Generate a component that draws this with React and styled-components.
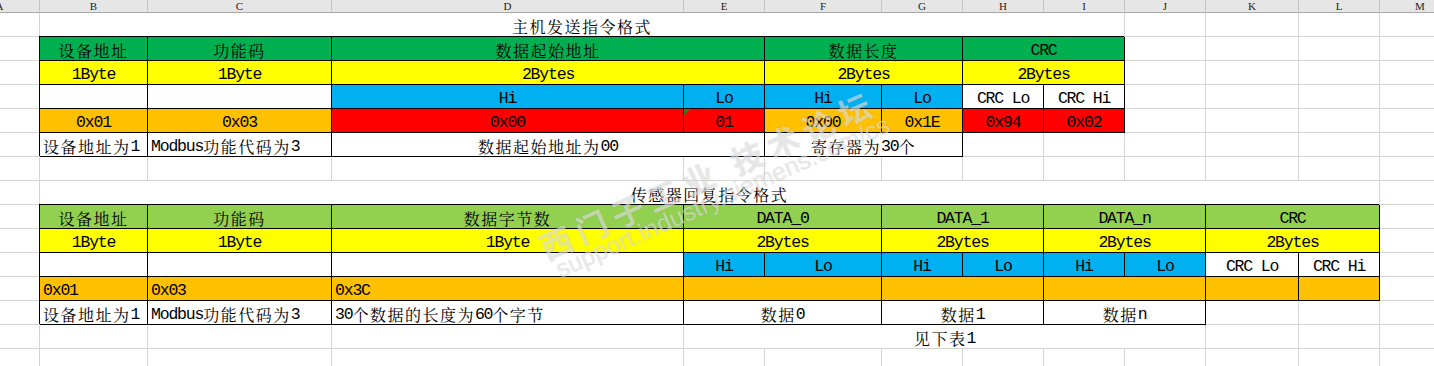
import React from 'react'
import styled, { createGlobalStyle, css } from 'styled-components'

// excel colours
const G = '#00B050'
const LG = '#92D050'
const Y = '#FFFF00'
const B = '#00B0F0'
const O = '#FFC000'
const R = '#FF0000'
const W = '#FFFFFF'

const COLS = [80, 108, 184, 352, 81, 117, 81, 81, 81, 81, 93, 81, 81]
const LETTERS = ['A', 'B', 'C', 'D', 'E', 'F', 'G', 'H', 'I', 'J', 'K', 'L', 'M']

const GlobalStyle = createGlobalStyle`
  body {
    margin: 0;
    background: #fff;
  }
`;

const Page = styled.div`
  position: relative;
  width: 1434px;
  height: 366px;
  overflow: hidden;
  background: #fff;
`;

const Sheet = styled.div`
  display: grid;
  grid-template-columns: ${COLS.map((c) => c + 'px').join(' ')};
  grid-template-rows: 13px repeat(15, 24px);
  width: max-content;
  margin-left: -40px;
`;

const Head = styled.div`
  box-sizing: border-box;
  background: #e6e6e6;
  border-right: 1px solid #c6c6c6;
  border-bottom: 1px solid #a8a8a8;
  display: flex;
  justify-content: center;
  align-items: center;
  font: 11px "Liberation Serif", serif;
  line-height: 12px;
  color: #222;
`;

const Cell = styled.div`
  position: relative;
  box-sizing: border-box;
  grid-column: span ${(p) => p.$span};
  background: ${(p) => p.$bg || '#fff'};
  border-right: 1px solid ${(p) => (p.$box ? '#000' : '#d4d4d4')};
  border-bottom: 1px solid ${(p) => (p.$box ? '#000' : '#d4d4d4')};
  box-shadow: ${(p) => (p.$box ? '-1px -1px 0 0 #000' : 'none')};
  display: flex;
  align-items: flex-end;
  justify-content: ${(p) => (p.$align === 'left' ? 'flex-start' : 'center')};
  padding: 0 3px 2px;
  font-family: "Noto Sans CJK SC", sans-serif;
  font-size: 16px;
  line-height: 14px;
  white-space: nowrap;
  color: #000;

  ${(p) =>
    p.$tri &&
    css`
      &::before {
        content: '';
        position: absolute;
        left: 0;
        top: 0;
        border-top: 6px solid #1e8a1e;
        border-right: 6px solid transparent;
      }
    `}
`;

const Han = styled.span`
  font-family: "Noto Serif CJK SC", "Noto Sans CJK SC", sans-serif;
  font-size: 16px;
  letter-spacing: 1.5px;
`;

const Lat = styled.span`
  font-family: "Liberation Mono", monospace;
  font-size: 16.5px;
  letter-spacing: -1.2px;
`;

const Mark = styled.div`
  position: absolute;
  left: ${(p) => p.$x}px;
  top: ${(p) => p.$y}px;
  transform-origin: 0 50%;
  transform: rotate(-24deg);
  white-space: nowrap;
  line-height: 1;
  color: rgba(255, 255, 255, 0.5);
  text-shadow: 0 0 1px rgba(90, 90, 90, 0.3);
  pointer-events: none;
`;

const MarkTitle = styled(Mark)`
  font: 700 32px "Noto Sans CJK SC", sans-serif;
  letter-spacing: 7px;
`;

const MarkUrl = styled(Mark)`
  font: 400 25px "Liberation Sans", sans-serif;
`;

const cell = (text = '', o = {}) => ({ text, span: 1, box: false, bg: null, align: 'center', ...o })
const blank = (n) => Array.from({ length: n }, () => cell())
const bx = (bg, text = '', span = 1, align = 'center', extra = {}) =>
  cell(text, { bg, span, box: true, align, ...extra })

const rows = [
  [cell(), cell('主机发送指令格式', { span: 8 }), ...blank(4)],
  [cell(), bx(G, '设备地址'), bx(G, '功能码'), bx(G, '数据起始地址', 2), bx(G, '数据长度', 2), bx(G, 'CRC', 2), ...blank(4)],
  [cell(), bx(Y, '1Byte'), bx(Y, '1Byte'), bx(Y, '2Bytes', 2), bx(Y, '2Bytes', 2), bx(Y, '2Bytes', 2), ...blank(4)],
  [cell(), bx(W), bx(W), bx(B, 'Hi'), bx(B, 'Lo'), bx(B, 'Hi'), bx(B, 'Lo'), bx(W, 'CRC Lo'), bx(W, 'CRC Hi'), ...blank(4)],
  [cell(), bx(O, '0x01'), bx(O, '0x03'), bx(R, '0x00'), bx(R, '01', 1, 'center', { tri: true }), bx(O, '0x00'), bx(O, '0x1E'), bx(R, '0x94'), bx(R, '0x02'), ...blank(4)],
  [cell(), bx(W, '设备地址为1', 1, 'left'), bx(W, 'Modbus功能代码为3', 1, 'left'), bx(W, '数据起始地址为00', 2), bx(W, '寄存器为30个', 2), ...blank(6)],
  blank(13),
  [cell(), cell('传感器回复指令格式', { span: 11 }), cell()],
  [cell(), bx(LG, '设备地址'), bx(LG, '功能码'), bx(LG, '数据字节数'), bx(LG, 'DATA_0', 2), bx(LG, 'DATA_1', 2), bx(LG, 'DATA_n', 2), bx(LG, 'CRC', 2), cell()],
  [cell(), bx(Y, '1Byte'), bx(Y, '1Byte'), bx(Y, '1Byte'), bx(Y, '2Bytes', 2), bx(Y, '2Bytes', 2), bx(Y, '2Bytes', 2), bx(Y, '2Bytes', 2), cell()],
  [cell(), bx(W), bx(W), bx(W), bx(B, 'Hi'), bx(B, 'Lo'), bx(B, 'Hi'), bx(B, 'Lo'), bx(B, 'Hi'), bx(B, 'Lo'), bx(W, 'CRC Lo'), bx(W, 'CRC Hi'), cell()],
  [cell(), bx(O, '0x01', 1, 'left'), bx(O, '0x03', 1, 'left'), bx(O, '0x3C', 1, 'left'), bx(O, '', 2), bx(O, '', 2), bx(O, '', 2), bx(O), bx(O), cell()],
  [cell(), bx(W, '设备地址为1', 1, 'left'), bx(W, 'Modbus功能代码为3', 1, 'left'), bx(W, '30个数据的长度为60个字节', 1, 'left'), bx(W, '数据0', 2), bx(W, '数据1', 2), bx(W, '数据n', 2), ...blank(3)],
  [...blank(4), cell('见下表1', { span: 6 }), ...blank(3)],
  blank(13),
]

// split into CJK and latin runs so each gets its own font
const renderText = (s) =>
  s
    .split(/([\u3000-\u9fff]+)/)
    .filter(Boolean)
    .map((part, i) =>
      /[\u3000-\u9fff]/.test(part) ? <Han key={i}>{part}</Han> : <Lat key={i}>{part}</Lat>
    )

const App = () => {
  return (
    <Page>
      <GlobalStyle />
      <Sheet>
        {LETTERS.map((l) => (
          <Head key={l}>{l}</Head>
        ))}
        {rows.map((row, r) =>
          row.map((c, i) => (
            <Cell
              key={r + '-' + i}
              $span={c.span}
              $bg={c.bg}
              $box={c.box}
              $align={c.align}
              $tri={c.tri}
            >
              {c.text && renderText(c.text)}
            </Cell>
          ))
        )}
      </Sheet>
      <MarkTitle $x={541} $y={225}>西门子工业 技术论坛</MarkTitle>
      <MarkUrl $x={557} $y={256}>support.industry.siemens.com/cs</MarkUrl>
    </Page>
  )
}

export default App
